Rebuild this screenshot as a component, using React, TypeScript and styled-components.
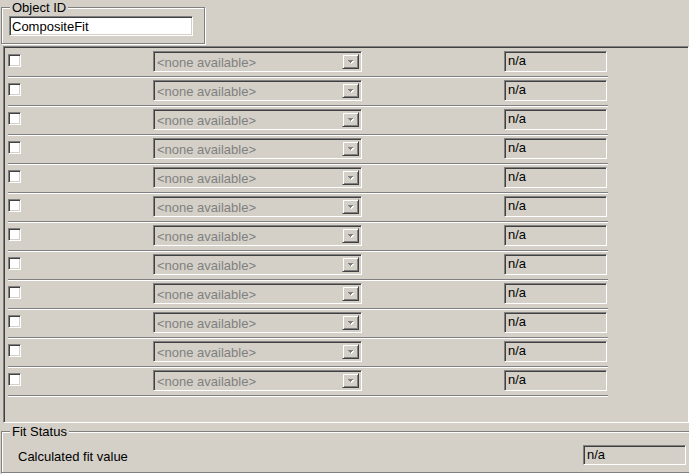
import React from "react";
import styled, { createGlobalStyle, css } from "styled-components";

const GlobalStyle = createGlobalStyle`
  html, body {
    margin: 0;
    padding: 0;
    background: #d4d0c8;
    overflow: hidden;
  }
  body {
    font-family: "Liberation Sans", Arial, sans-serif;
    font-size: 13px;
    color: #000;
  }
`;

const sunken = css`
  box-sizing: border-box;
  border-style: solid;
  border-width: 1px;
  border-color: #808080 #ffffff #ffffff #808080;
  box-shadow: inset 1px 1px 0 #404040, inset -1px -1px 0 #d4d0c8;
`;

const Window = styled.div`
  width: 689px;
  height: 474px;
  overflow: hidden;
  display: flex;
  flex-direction: column;
  background: #d4d0c8;
  font-family: "Liberation Sans", Arial, sans-serif;
  font-size: 13px;
`;

const GroupBox = styled.div<{ $width: number; $height: number; $top: number }>`
  position: relative;
  box-sizing: border-box;
  flex: none;
  width: ${(p) => p.$width}px;
  height: ${(p) => p.$height}px;
  margin: ${(p) => p.$top}px 0 0 1px;
  border: 1px solid #808080;
  box-shadow: inset 1px 1px 0 #ffffff, 1px 1px 0 #ffffff;
`;

const Caption = styled.span`
  position: absolute;
  top: -8px;
  left: 8px;
  padding: 0 2px;
  line-height: 15px;
  background: #d4d0c8;
  white-space: nowrap;
`;

const ObjectBody = styled.div`
  padding: 8px 0 0 7px;
`;

const TextField = styled.input`
  ${sunken};
  display: block;
  width: 184px;
  height: 20px;
  margin: 0;
  padding: 0 0 0 2px;
  background: #ffffff;
  font-family: "Liberation Sans", Arial, sans-serif;
  font-size: 13px;
  color: #000;
  outline: none;
`;

const Panel = styled.div`
  box-sizing: border-box;
  flex: none;
  width: 686px;
  height: 377px;
  margin: 2px 0 0 3px;
  padding: 2px 0 0 4px;
  border-style: solid;
  border-width: 1px;
  border-color: #808080 #ffffff #ffffff #808080;
  box-shadow: inset 1px 1px 0 #404040;
`;

const Row = styled.div`
  box-sizing: content-box;
  display: grid;
  grid-template-columns: 145px 209px 142px 103px;
  align-items: start;
  width: 600px;
  padding: 2px 0 4px;
  margin-bottom: 1px;
  border-bottom: 1px solid #808080;
  box-shadow: 0 1px 0 #ffffff;
`;

const CheckBox = styled.span`
  ${sunken};
  display: block;
  width: 13px;
  height: 13px;
  margin-top: 3px;
  background: #ffffff;
`;

const Combo = styled.div`
  ${sunken};
  display: flex;
  align-items: stretch;
  height: 21px;
  padding: 2px;
  background: #d4d0c8;
`;

const ComboText = styled.span`
  flex: 1;
  min-width: 0;
  padding: 1px 0 0 1px;
  line-height: 16px;
  color: #808080;
  white-space: nowrap;
`;

const DropButton = styled.span`
  box-sizing: border-box;
  flex: none;
  width: 17px;
  display: flex;
  align-items: center;
  justify-content: center;
  border-style: solid;
  border-width: 1px;
  border-color: #d4d0c8 #404040 #404040 #d4d0c8;
  box-shadow: inset 1px 1px 0 #ffffff, inset -1px -1px 0 #808080;
  background: #d4d0c8;
`;

const ValueField = styled.div<{ $height: number }>`
  ${sunken};
  height: ${(p) => p.$height}px;
  width: 103px;
  padding: 1px 0 0 3px;
  line-height: ${(p) => p.$height - 5}px;
  background: #d4d0c8;
  color: #000;
  white-space: nowrap;
`;

const StatusBody = styled.div`
  display: flex;
  align-items: center;
  justify-content: space-between;
  padding: 13px 4px 0 16px;
`;

const StatusLabel = styled.span`
  padding-top: 3px;
  line-height: 15px;
`;

const Arrow = () => (
  <svg width="6" height="4" viewBox="0 0 6 4" shapeRendering="crispEdges" style={{ marginTop: 1 }}>
    <path d="M1 1h5v1H1z M2 2h3v1H2z M3 3h1v1H3z" fill="#ffffff" />
    <path d="M0 0h5v1H0z M1 1h3v1H1z M2 2h1v1H2z" fill="#808080" />
  </svg>
);

const rows = Array.from({ length: 12 }, (_, i) => i);

export default function App() {
  return (
    <>
      <GlobalStyle />
      <Window>
        <GroupBox $width={204} $height={37} $top={7}>
          <Caption>Object ID</Caption>
          <ObjectBody>
            <TextField readOnly value="CompositeFit" />
          </ObjectBody>
        </GroupBox>
        <Panel>
          {rows.map((i) => (
            <Row key={i}>
              <CheckBox />
              <Combo>
                <ComboText>&lt;none available&gt;</ComboText>
                <DropButton>
                  <Arrow />
                </DropButton>
              </Combo>
              <span />
              <ValueField $height={21}>n/a</ValueField>
            </Row>
          ))}
        </Panel>
        <GroupBox $width={690} $height={42} $top={8}>
          <Caption>Fit Status</Caption>
          <StatusBody>
            <StatusLabel>Calculated fit value</StatusLabel>
            <ValueField $height={20}>n/a</ValueField>
          </StatusBody>
        </GroupBox>
      </Window>
    </>
  );
}
